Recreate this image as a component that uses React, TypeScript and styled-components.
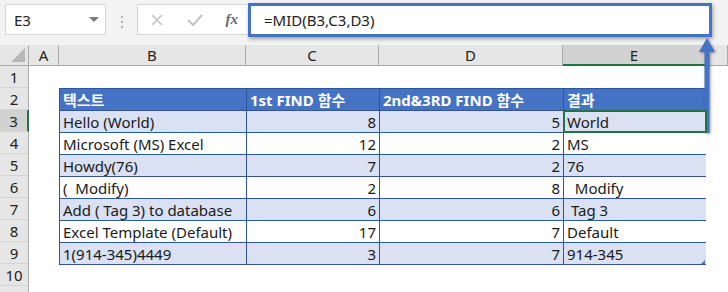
import React from 'react'
import styled, { createGlobalStyle } from 'styled-components'

const GlobalStyle = createGlobalStyle`
  html, body {
    margin: 0;
    padding: 0;
    background: #ffffff;
  }
  * {
    box-sizing: border-box;
  }
`

const FONT = `"Noto Sans", "Noto Sans CJK KR", sans-serif`

const Page = styled.div`
  position: relative;
  width: 728px;
  height: 292px;
  overflow: hidden;
  font-family: ${FONT};
  background: #ffffff;
`

const FormulaBar = styled.div`
  display: flex;
  align-items: flex-start;
  height: 45px;
  padding: 3px 16px 0 5px;
  background: #f3f3f3;
`

const NameBox = styled.div`
  display: flex;
  align-items: center;
  justify-content: space-between;
  width: 101px;
  height: 31px;
  margin-top: 1px;
  padding: 0 6px 0 8px;
  background: #ffffff;
  border: 1px solid #d6d6d6;
  font-size: 15px;
  color: #222;
`

const Caret = styled.span`
  width: 0;
  height: 0;
  border-left: 5px solid transparent;
  border-right: 5px solid transparent;
  border-top: 5px solid #7a7a7a;
`

const Grip = styled.div`
  display: flex;
  flex-direction: column;
  gap: 3px;
  margin: 13px 14px 0 15px;
  > span {
    width: 2px;
    height: 2px;
    background: #b5b5b5;
  }
`

const Buttons = styled.div`
  display: flex;
  align-items: center;
  width: 111px;
  height: 31px;
  margin-top: 1px;
  padding: 0 10px 0 12px;
  gap: 14px;
  background: #ffffff;
  border: 1px solid #d6d6d6;
  border-right: none;
`

const Fx = styled.span`
  margin-left: auto;
  font-family: "Liberation Serif", serif;
  font-style: italic;
  font-weight: bold;
  font-size: 15px;
  color: #6a6a6a;
`

const FormulaInput = styled.div`
  flex: 1;
  display: flex;
  align-items: center;
  height: 34px;
  padding-left: 13px;
  background: #ffffff;
  border: 3px solid #4472c4;
  box-shadow: 1px 2px 4px rgba(0, 0, 0, 0.35);
  font-size: 15px;
  color: #222;
`

const Sheet = styled.div`
  display: grid;
  grid-template-columns: 29px 30px 187px 133px 184px 143px 1fr;
  grid-template-rows: 21px repeat(11, 22px);
`

const Corner = styled.div`
  position: relative;
  background: #e6e6e6;
  border-right: 1px solid #ababab;
  border-bottom: 1px solid #ababab;
  &::after {
    content: '';
    position: absolute;
    right: 3px;
    bottom: 3px;
    width: 0;
    height: 0;
    border-left: 14px solid transparent;
    border-bottom: 14px solid #b7b7b7;
  }
`

const ColHead = styled.div<{ $active?: boolean }>`
  display: flex;
  align-items: center;
  justify-content: center;
  background: ${({ $active }) => ($active ? '#d2d2d2' : '#e6e6e6')};
  border-right: 1px solid #ababab;
  border-bottom: ${({ $active }) => ($active ? '2px solid #217346' : '1px solid #ababab')};
  font-size: 15px;
  color: #222;
  &:last-of-type {
    border-right: none;
  }
`

const RowHead = styled.div<{ $active?: boolean; $row: number }>`
  grid-column: 1;
  grid-row: ${({ $row }) => $row + 1};
  display: flex;
  align-items: center;
  justify-content: center;
  background: ${({ $active }) => ($active ? '#d2d2d2' : '#e6e6e6')};
  border-right: ${({ $active }) => ($active ? '2px solid #217346' : '1px solid #ababab')};
  border-bottom: 1px solid #d4d4d4;
  font-size: 15px;
  color: #222;
`

const Table = styled.div`
  grid-column: 3 / 7;
  grid-row: 3 / 11;
  align-self: start;
  display: grid;
  grid-template-columns: 186px 132px 183px 142px;
  grid-auto-rows: 21px;
  gap: 1px;
  padding: 1px;
  height: 177px;
  background: #2f5597;
  position: relative;
  &::after {
    content: '';
    position: absolute;
    right: 1px;
    bottom: 1px;
    width: 0;
    height: 0;
    border-left: 4px solid transparent;
    border-bottom: 4px solid #4472c4;
  }
`

const Cell = styled.div<{ $head?: boolean; $band?: boolean; $num?: boolean; $selected?: boolean }>`
  display: flex;
  align-items: center;
  justify-content: ${({ $num }) => ($num ? 'flex-end' : 'flex-start')};
  padding: 0 3px;
  white-space: pre;
  overflow: hidden;
  font-size: 15px;
  font-weight: ${({ $head }) => ($head ? 'bold' : 'normal')};
  color: ${({ $head }) => ($head ? '#ffffff' : '#1a1a1a')};
  background: ${({ $head, $band }) => ($head ? '#4472c4' : $band ? '#d9e1f2' : '#ffffff')};
  outline: ${({ $selected }) => ($selected ? '2px solid #217346' : 'none')};
  outline-offset: -1px;
  z-index: ${({ $selected }) => ($selected ? 1 : 0)};
`

const Arrow = styled.svg`
  position: absolute;
  left: 697px;
  top: 36px;
  filter: drop-shadow(1px 1px 1.5px rgba(0, 0, 0, 0.4));
`

const rows: [string, number, number, string][] = [
  ['Hello (World)', 8, 5, 'World'],
  ['Microsoft (MS) Excel', 12, 2, 'MS'],
  ['Howdy(76)', 7, 2, '76'],
  ['(  Modify)', 2, 8, '  Modify'],
  ['Add ( Tag 3) to database', 6, 6, ' Tag 3'],
  ['Excel Template (Default)', 17, 7, 'Default'],
  ['1(914-345)4449', 3, 7, '914-345'],
]

const columns = ['A', 'B', 'C', 'D', 'E', '']

const App = () => {
  return (
    <Page>
      <GlobalStyle />
      <FormulaBar>
        <NameBox>
          E3
          <Caret />
        </NameBox>
        <Grip>
          <span />
          <span />
          <span />
        </Grip>
        <Buttons>
          <svg width="14" height="14" viewBox="0 0 14 14">
            <path d="M2 2 L12 12 M12 2 L2 12" stroke="#c4c4c4" strokeWidth="1.6" fill="none" />
          </svg>
          <svg width="18" height="14" viewBox="0 0 18 14" style={{ marginLeft: 8 }}>
            <path d="M2 7 L7 12 L16 2" stroke="#c4c4c4" strokeWidth="2" fill="none" />
          </svg>
          <Fx>fx</Fx>
        </Buttons>
        <FormulaInput>=MID(B3,C3,D3)</FormulaInput>
      </FormulaBar>

      <Sheet>
        <Corner />
        {columns.map((c, i) => (
          <ColHead key={i} $active={c === 'E'}>
            {c}
          </ColHead>
        ))}
        {Array.from({ length: 11 }, (_, i) => (
          <RowHead key={i} $row={i + 1} $active={i + 1 === 3}>
            {i < 10 ? i + 1 : ''}
          </RowHead>
        ))}
        <Table>
          <Cell $head>텍스트</Cell>
          <Cell $head>1st FIND 함수</Cell>
          <Cell $head>2nd&amp;3RD FIND 함수</Cell>
          <Cell $head>결과</Cell>
          {rows.map(([text, first, second, result], i) => (
            <React.Fragment key={text}>
              <Cell $band={i % 2 === 0}>{text}</Cell>
              <Cell $band={i % 2 === 0} $num>
                {first}
              </Cell>
              <Cell $band={i % 2 === 0} $num>
                {second}
              </Cell>
              <Cell $band={i % 2 === 0} $selected={i === 0}>
                {result}
              </Cell>
            </React.Fragment>
          ))}
        </Table>
      </Sheet>

      <Arrow width="22" height="100" viewBox="0 0 22 100">
        <polygon points="10,2 18,16 2,16" fill="#4472c4" />
        <rect x="7.5" y="14" width="5" height="83" fill="#4472c4" />
      </Arrow>
    </Page>
  )
}

export default App
